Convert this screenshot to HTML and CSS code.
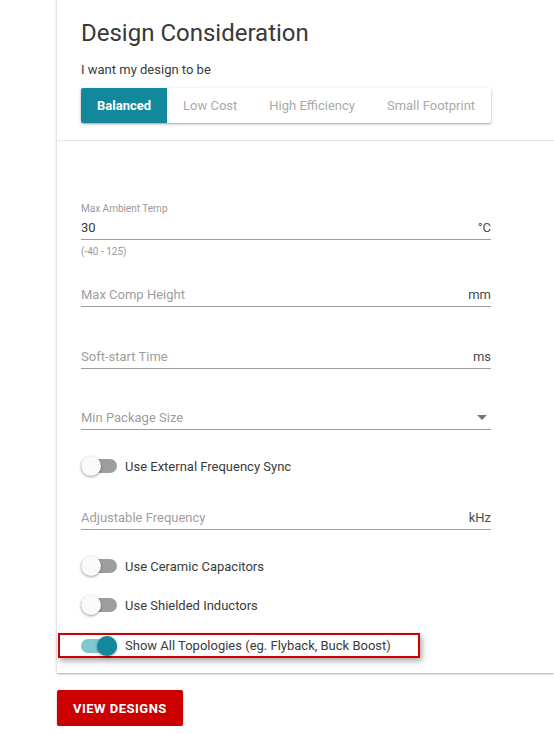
FILE: index.html
```html
<!DOCTYPE html>
<html lang="en">
<head>
<meta charset="utf-8">
<title>Design Consideration</title>
<link rel="stylesheet" href="styles.css">
</head>
<body>
<div class="card">
  <div class="head">
    <h1 class="title">Design Consideration</h1>
    <p class="subtitle">I want my design to be</p>
    <div class="seg">
      <span class="seg-item active">Balanced</span>
      <span class="seg-item">Low Cost</span>
      <span class="seg-item">High Efficiency</span>
      <span class="seg-item">Small Footprint</span>
    </div>
  </div>
  <div class="form">
    <div class="field">
      <div class="field-label">Max Ambient Temp</div>
      <div class="field-row"><span class="value">30</span><span class="unit">°C</span></div>
      <div class="helper">(-40 - 125)</div>
    </div>
    <div class="field gap-24">
      <div class="field-row"><span class="placeholder">Max Comp Height</span><span class="unit">mm</span></div>
    </div>
    <div class="field gap-38">
      <div class="field-row"><span class="placeholder">Soft-start Time</span><span class="unit">ms</span></div>
    </div>
    <div class="field gap-37">
      <div class="field-row"><span class="placeholder">Min Package Size</span><span class="caret"></span></div>
    </div>
    <div class="toggle-row gap-24">
      <span class="switch"><span class="switch-track"></span><span class="switch-knob"></span></span>
      <span>Use External Frequency Sync</span>
    </div>
    <div class="field gap-28">
      <div class="field-row"><span class="placeholder">Adjustable Frequency</span><span class="unit">kHz</span></div>
    </div>
    <div class="toggle-row gap-24">
      <span class="switch"><span class="switch-track"></span><span class="switch-knob"></span></span>
      <span>Use Ceramic Capacitors</span>
    </div>
    <div class="toggle-row gap-15">
      <span class="switch"><span class="switch-track"></span><span class="switch-knob"></span></span>
      <span>Use Shielded Inductors</span>
    </div>
    <div class="toggle-row highlight gap-16">
      <span class="switch on"><span class="switch-track"></span><span class="switch-knob"></span></span>
      <span>Show All Topologies (eg. Flyback, Buck Boost)</span>
    </div>
  </div>
</div>
<button class="cta">VIEW DESIGNS</button>
</body>
</html>
```
FILE: styles.css
```css
* { box-sizing: border-box; }
html, body {
  margin: 0;
  background: #fff;
  font-family: Roboto, "Noto Sans", "Liberation Sans", sans-serif;
  color: #3a3a3a;
}
body { overflow: hidden; }

.card {
  margin: -10px 0 0 57px;
  background: #fff;
  box-shadow: 0 1px 3px rgba(0,0,0,0.22), 0 1px 1px rgba(0,0,0,0.12);
}
.head {
  padding: 29px 63px 17px 24px;
  border-bottom: 1px solid #e6e6e6;
}
.title {
  margin: 0;
  font-size: 24px;
  font-weight: 400;
  line-height: 28px;
  color: #383838;
}
.subtitle {
  margin: 14px 0 0;
  font-size: 13px;
  line-height: 18px;
  color: #3a3a3a;
}
.seg {
  margin-top: 9px;
  display: flex;
  height: 35px;
  background: #fff;
  border-radius: 2px;
  box-shadow: 0 1px 3px rgba(0,0,0,0.3), 0 1px 1px rgba(0,0,0,0.1);
}
.seg-item {
  padding: 0 16px;
  line-height: 35px;
  font-size: 13px;
  color: #aaa;
  white-space: nowrap;
}
.seg-item.active {
  background: #12899a;
  color: #fff;
  font-weight: 700;
  border-radius: 2px 0 0 2px;
}

.form { padding: 61px 63px 15px 24px; }

.field-label {
  font-size: 10px;
  line-height: 14px;
  color: #999;
}
.field-row {
  display: flex;
  justify-content: space-between;
  align-items: center;
  height: 24px;
  border-bottom: 1px solid #9e9e9e;
  font-size: 13px;
}
.placeholder { color: #9e9e9e; }
.value { color: #3a3a3a; }
.unit { color: #4a4a4a; }
.helper {
  margin-top: 5px;
  font-size: 10px;
  line-height: 14px;
  color: #999;
}
.caret {
  width: 0;
  height: 0;
  border-left: 5px solid transparent;
  border-right: 5px solid transparent;
  border-top: 5px solid #757575;
  margin-right: 4px;
}

.toggle-row {
  display: flex;
  align-items: center;
  gap: 8px;
  height: 24px;
  font-size: 13px;
  color: #3a3a3a;
}
.switch {
  position: relative;
  flex: none;
  width: 36px;
  height: 20px;
}
.switch-track {
  position: absolute;
  left: 0;
  top: 3px;
  width: 36px;
  height: 14px;
  border-radius: 7px;
  background: #9e9e9e;
}
.switch-knob {
  position: absolute;
  left: 0;
  top: 0;
  width: 20px;
  height: 20px;
  border-radius: 50%;
  background: #fafafa;
  box-shadow: 0 1px 3px rgba(0,0,0,0.4);
}
.switch.on .switch-track { background: #80c8d0; }
.switch.on .switch-knob { left: 16px; background: #12899a; }

.toggle-row.highlight {
  margin-left: -23px;
  width: 362px;
  height: 25px;
  padding-left: 21px;
  border: 2px solid #cc0000;
  box-shadow: 2px 3px 6px rgba(0,0,0,0.35);
}

.gap-15 { margin-top: 15px; }
.gap-16 { margin-top: 16px; }
.gap-24 { margin-top: 24px; }
.gap-28 { margin-top: 28px; }
.gap-37 { margin-top: 37px; }
.gap-38 { margin-top: 38px; }

.cta {
  display: block;
  margin: 17px 0 0 57px;
  height: 36px;
  padding: 0 16px;
  background: #cc0000;
  color: #fff;
  border: 0;
  border-radius: 2px;
  font-family: Roboto, "Noto Sans", "Liberation Sans", sans-serif;
  font-size: 13px;
  font-weight: 700;
  letter-spacing: 0.5px;
  box-shadow: 0 2px 2px rgba(0,0,0,0.24), 0 0 2px rgba(0,0,0,0.12);
}
```
